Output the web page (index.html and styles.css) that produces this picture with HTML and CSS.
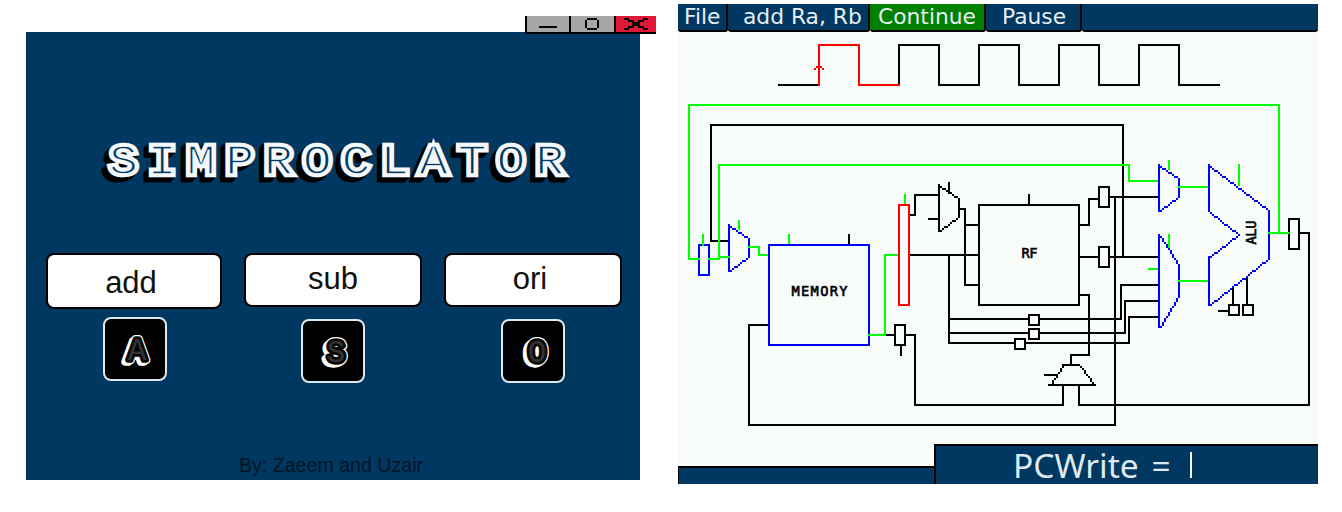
FILE: index.html
```
<!DOCTYPE html>
<html lang="en">
<head>
<meta charset="utf-8">
<title>Simproclator</title>
<link rel="stylesheet" href="styles.css">
</head>
<body>
<main class="desktop">
  <section class="launcher">
    <div class="window-controls">
      <svg class="control" viewBox="0 0 42 16"><path d="M12 11H30"/></svg>
      <svg class="control" viewBox="0 0 43 16"><path d="M16 3H26M16 13H26M15 4V12M27 4V12"/></svg>
      <svg class="control close" viewBox="0 0 40 16"><path d="M8 3H13M12 5H18M16 7H24M16 9H24M22 5H28M27 3H32M12 11H18M8 13H13M22 11H28M27 13H32"/></svg>
    </div>
    <div class="launcher-body">
      <svg class="logo" viewBox="96 132 480 60">
        <defs><text id="title" class="logo-text" transform="translate(109 174) scale(1.12 1)">SIMPROCLATOR</text></defs>
        <g class="logo-shadow">
          <use href="#title" x="-1" y="1"/><use href="#title" x="-2" y="2"/><use href="#title" x="-3" y="3"/><use href="#title" x="-4" y="4"/><use href="#title" x="-5" y="5"/>
        </g>
        <use href="#title" class="logo-outer"/>
        <use href="#title" class="logo-inner"/>
      </svg>
      <div class="operations">
        <div class="operation first">
          <button class="op-button">add</button>
          <svg class="key" viewBox="0 0 60 60">
            <defs><text id="key-a" class="key-text" x="32" y="41">A</text></defs>
            <g class="key-shadow"><use href="#key-a" x="-1" y="1"/><use href="#key-a" x="-2" y="2"/><use href="#key-a" x="-3" y="2"/></g>
            <use href="#key-a" class="key-rim"/><use href="#key-a" class="key-face"/>
          </svg>
        </div>
        <div class="operation">
          <button class="op-button">sub</button>
          <svg class="key" viewBox="0 0 60 60">
            <defs><text id="key-s" class="key-text" x="33" y="41">S</text></defs>
            <g class="key-shadow"><use href="#key-s" x="-1" y="1"/><use href="#key-s" x="-2" y="2"/><use href="#key-s" x="-3" y="2"/></g>
            <use href="#key-s" class="key-rim"/><use href="#key-s" class="key-face"/>
          </svg>
        </div>
        <div class="operation">
          <button class="op-button ori">ori</button>
          <svg class="key" viewBox="0 0 60 60">
            <defs><text id="key-o" class="key-text" x="34" y="41">O</text></defs>
            <g class="key-shadow"><use href="#key-o" x="-1" y="1"/><use href="#key-o" x="-2" y="2"/><use href="#key-o" x="-3" y="2"/></g>
            <use href="#key-o" class="key-rim"/><use href="#key-o" class="key-face"/>
          </svg>
        </div>
      </div>
      <p class="credit">By: Zaeem and Uzair</p>
    </div>
  </section>

  <section class="simulator">
    <nav class="toolbar">
      <span class="tab file">File</span>
      <span class="tab instruction">add Ra, Rb</span>
      <span class="tab continue">Continue</span>
      <span class="tab pause">Pause</span>
      <span class="tab rest"></span>
    </nav>
    <svg class="datapath" viewBox="678 32 640 412">
      <g class="wire black">
        <path d="M778 85H818M899 84V45H939V85H979V45H1019V85H1059V45H1099V85H1139V45H1179V85H1220"/>
        <path d="M728 241H711V125H1123V257"/>
        <path d="M768 325H749V425H1115V197"/>
        <path d="M849 234V244M886 335H894M895 325h10v20h-10zM901 346V356M906 335H915V405H1063V386"/>
        <path d="M910 215H915V195H938M939 184V232M949 182V192M928 219H938M959 198V216"/>
        <path d="M960 209H965V285H978M965 225H978M910 255H978M979 205h100v100h-100zM1029 194V204"/>
        <path d="M949 255V343H1014M949 319H1028M949 333H1028M1029 315h10v10h-10zM1029 329h10v10h-10zM1015 339h10v10h-10z"/>
        <path d="M1040 319H1121V285H1158M1040 333H1125V301H1158M1026 343H1129V317H1158"/>
        <path d="M1080 225H1089V199H1098M1099 187h10v20h-10zM1110 197H1158M1080 257H1098M1099 247h10v20h-10zM1110 257H1158"/>
        <path d="M1080 295H1089V355H1071V364M1062 365H1080M1048 385H1096M1044 375H1056"/>
        <path d="M1289 219h10v30h-10zM1300 233H1309V405H1079V386"/>
        <path d="M1233 286V304M1247 278V304M1229 305h10v10h-10zM1243 305h10v10h-10zM1218 311H1228"/>
      </g>
      <g class="wire blue">
        <path d="M699 245h10v30h-10zM729 224V272M749 238V256M769 245h100v100h-100z"/>
        <path d="M1159 164V212M1179 178V196M1159 234V328M1179 264V296"/>
        <path d="M1209 164V212M1209 256V306M1269 210V258"/>
      </g>
      <g class="wire green">
        <path d="M700 259H689V105H1279V233M708 259H719V165H1129V181H1158M719 257H730"/>
        <path d="M703 234V246M739 220V230M748 247H759V255H768M789 234V244M868 335H885V255H898M905 194V204"/>
        <path d="M1169 160V170M1178 187H1208M1169 234V248M1148 269H1158M1178 281H1208M1239 164V186M1268 233H1290"/>
      </g>
      <g class="wire red">
        <path d="M819 86V45H859V85H900M814 69H816M816 67H822M822 69H824M899 205h10v100h-10z"/>
      </g>
      <path id="slopes-black" class="slope-black"/>
      <path id="slopes-blue" class="slope-blue"/>
      <text class="block-label" x="791.5" y="296" textLength="56">MEMORY</text>
      <text class="block-label" x="1021.5" y="258" textLength="16">RF</text>
      <text class="block-label" transform="translate(1256 244.5) rotate(-90)" textLength="24">ALU</text>
    </svg>
    <footer class="status">
      <div class="status-left"></div>
      <div class="status-right"><span>PCWrite =</span><i class="caret"></i></div>
    </footer>
  </section>
</main>
<script src="slopes.js"></script>
</body>
</html>
```
FILE: slopes.js
```
// Slanted component edges, drawn as stepped lines on a two-pixel grid.
const slopes = {
  black: [
    [940, 186, 958, 198], [940, 230, 958, 216],
    [1062, 366, 1050, 384], [1080, 366, 1094, 384]
  ],
  blue: [
    [730, 226, 748, 238], [730, 270, 748, 256],
    [1160, 166, 1178, 178], [1160, 210, 1178, 196],
    [1160, 236, 1178, 264], [1160, 326, 1178, 296],
    [1210, 166, 1268, 210], [1210, 304, 1268, 258],
    [1210, 212, 1238, 234], [1210, 256, 1238, 234]
  ]
};
for (const [color, lines] of Object.entries(slopes)) {
  let d = "";
  for (const [x1, y1, x2, y2] of lines) {
    const steps = Math.max(Math.abs(x2 - x1), Math.abs(y2 - y1)) / 2;
    for (let i = 0; i <= steps; i++) {
      const x = 2 * Math.round((x1 + (x2 - x1) * i / steps) / 2);
      const y = 2 * Math.round((y1 + (y2 - y1) * i / steps) / 2);
      d += `M${x} ${y}h2v2h-2z`;
    }
  }
  document.getElementById("slopes-" + color).setAttribute("d", d);
}
```
FILE: styles.css
```
* { box-sizing: border-box; }
body { margin: 0; background: #fff; }
.desktop { display: flex; align-items: flex-start; height: 512px; overflow: hidden; }

.launcher { width: 630px; margin: 16px 22px 0 26px; }
.window-controls { display: flex; width: 131px; height: 18px; margin-left: 499px; position: relative; z-index: 1; }
.control { flex: 0 0 44px; height: 18px; background: #a6a6a6; border-left: 2px solid #000; border-bottom: 2px solid #000; }
.control:nth-child(2) { flex-basis: 45px; }
.control.close { flex-basis: 42px; background: #e21a37; }
.control path { fill: none; stroke: #000; stroke-width: 2; shape-rendering: crispEdges; }
.launcher-body { width: 614px; height: 448px; margin-top: -2px; padding-top: 100px; background: #003861; }

.logo { display: block; width: 480px; height: 60px; margin-left: 70px; }
.logo-text { font: 43px "Liberation Mono", monospace; letter-spacing: 8.8px; }
.logo-shadow { fill: #000; stroke: #000; stroke-width: 7px; }
.logo-outer { fill: #f5f9fc; stroke: #f5f9fc; stroke-width: 6.6px; }
.logo-inner { fill: #003861; stroke: #f5f9fc; stroke-width: 1.6px; }

.operations { display: flex; gap: 22px; margin: 61px 0 0 20px; }
.operation { display: flex; flex-direction: column; align-items: center; width: 178px; }
.operation.first { width: 176px; }
.op-button { width: 100%; height: 54px; padding: 0 0 2px; border: 2px solid #000; border-radius: 8px; background: #fff; color: #111; font: 31px "Liberation Sans", sans-serif; }
.first .op-button { height: 56px; padding: 4px 6px 0 0; }
.op-button.ori { padding-right: 6px; }
.key { width: 64px; height: 64px; margin-top: 12px; border: 2px solid #dce8ef; border-radius: 8px; background: #000; }
.first .key { margin-top: 8px; margin-left: 2px; }
.key-text { font: 31px "Liberation Mono", monospace; text-anchor: middle; stroke-linejoin: round; }
.key-shadow { fill: #fff; stroke: #fff; stroke-width: 7px; }
.key-rim { fill: #fff; stroke: #fff; stroke-width: 8px; }
.key-face { fill: #333; stroke: #080808; stroke-width: 5.5px; paint-order: stroke; }
.credit { margin: 71px 0 0; padding-right: 4px; text-align: center; color: #001426; font: 19.6px/22px "Liberation Sans", sans-serif; }

.simulator { width: 640px; height: 480px; margin-top: 4px; background: #f7fcf9; }
.toolbar { display: flex; height: 28px; color: #e6eef3; font: 21.8px/26px "DejaVu Sans", sans-serif; }
.tab { flex: none; height: 28px; border-bottom: 2px solid #000; border-right: 2px solid #000; border-radius: 0 0 3px 3px; background: #003861; white-space: nowrap; }
.file { width: 50px; padding-left: 6px; }
.instruction { width: 142px; padding-left: 15px; }
.continue { width: 116px; padding-left: 8px; background: #008000; }
.pause { width: 96px; padding-left: 16px; }
.rest { flex: 1; border-right: 0; }
.datapath { display: block; width: 640px; height: 412px; }
.wire { fill: none; stroke-width: 2px; shape-rendering: crispEdges; }
.black { stroke: #000; }
.blue { stroke: #00f; }
.green { stroke: #0f0; }
.red { stroke: #f00; }
.slope-black { fill: #000; shape-rendering: crispEdges; }
.slope-blue { fill: #00f; shape-rendering: crispEdges; }
.block-label { font: 13.7px "DejaVu Sans Mono", monospace; fill: #000; stroke: #000; stroke-width: 0.6px; }
.status { display: flex; align-items: flex-end; height: 40px; }
.status-left { width: 256px; height: 18px; background: #003861; border-top: 2px solid #000; border-left: 1px solid #000; }
.status-right { display: flex; align-items: center; flex: 1; height: 40px; padding-left: 77px; background: #003861; border-top: 2px solid #000; border-left: 2px solid #000; color: #dfe9ef; font: 33.5px/38px "Noto Sans", sans-serif; word-spacing: 4px; }
.caret { width: 2px; height: 26px; margin-left: 19px; background: #fff; }
```
